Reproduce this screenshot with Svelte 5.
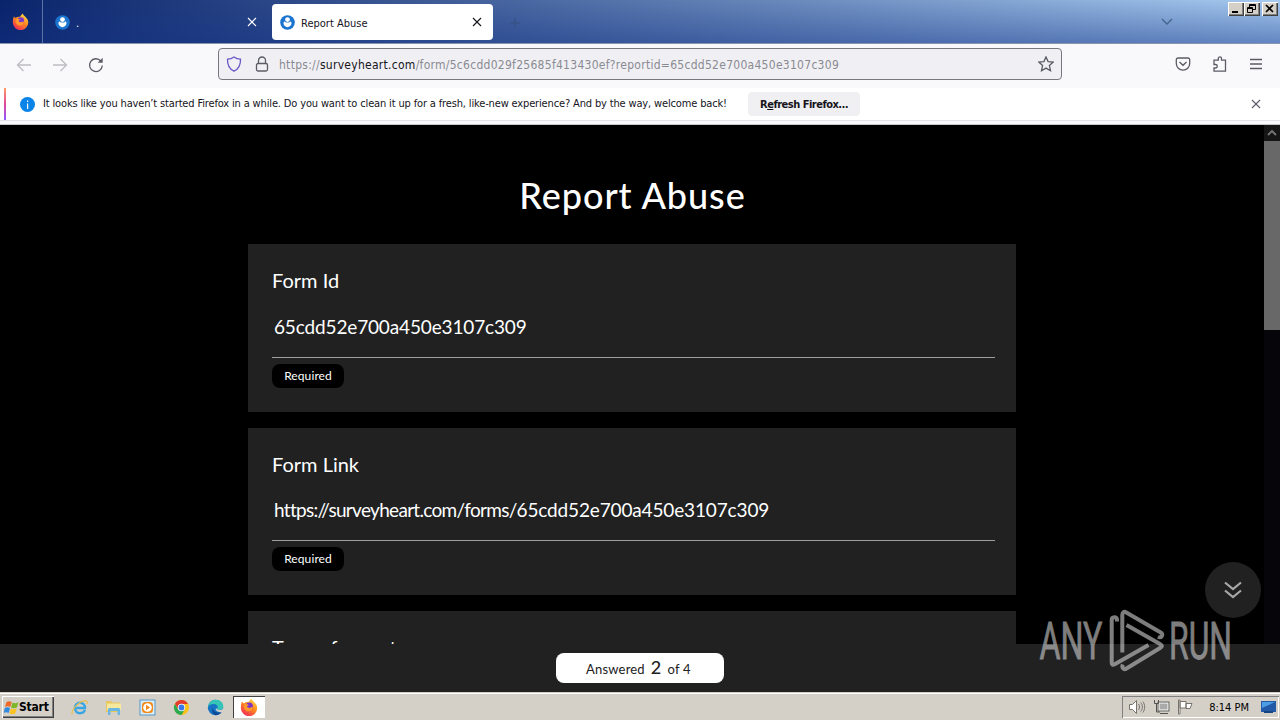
<script>
  const formId = '65cdd52e700a450e3107c309';

  const questions = [
    { label: 'Form Id', prefix: '', value: formId },
    { label: 'Form Link', prefix: 'https://surveyheart.com/forms/', value: formId },
    { label: 'Type of report' }
  ];
</script>

{#snippet firefox(size)}
  <svg width={size} height={size} viewBox="0 0 16 16">
    <defs>
      <linearGradient id="fox" x1="0.8" y1="0" x2="0.2" y2="1">
        <stop offset="0" stop-color="#ffe04a" />
        <stop offset="0.45" stop-color="#ff8a1f" />
        <stop offset="1" stop-color="#f0245c" />
      </linearGradient>
    </defs>
    <path d="M1.7 3.2 3.4 4.8C4.6 3.7 6 3.4 7.3 3.7 8.2 2.5 9.2 1.4 10.2.5c.2 1.3 1.3 2 2.5 3.2 1.6 1.5 2.6 3 2.6 5.1A7.2 7.2 0 0 1 .8 9C.7 6.9 1 4.9 1.7 3.2z" fill="url(#fox)" />
    <circle cx="8.2" cy="7.2" r="3.2" fill="#7b35c9" />
    <path d="M3.800 5.600c1.500-.5 3.100 0 4.200.8-1.500.2-2 1-1.600 1.700.6 1 2.800.9 4.800-.3-.2 3-2.200 4.400-4.400 4-2.400-.5-4-3.200-3-6.200z" fill="#ff9a2b" />
  </svg>
{/snippet}

{#snippet favicon()}
  <svg width="15" height="15" viewBox="0 0 15 15">
    <circle cx="7.5" cy="7.5" r="7.3" fill="#1b74cf" />
    <circle cx="7.5" cy="4.6" r="2.4" fill="#fff" />
    <path d="M4.300 6.300c.9 1 2 1.300 3.200 1.300s2.300-.3 3.200-1.300c1.700 2.100.6 5-3.200 6-3.800-1-4.900-3.900-3.200-6z" fill="#fff" />
  </svg>
{/snippet}

{#snippet cross(size)}
  <svg width={size} height={size} viewBox="0 0 10 10" fill="none" stroke="currentColor" stroke-width="1.1">
    <path d="M1 1l8 8M9 1L1 9" />
  </svg>
{/snippet}

<div class="screen">
  <header class="tabs">
    <div class="pinned">{@render firefox(17)}</div>
    <div class="tab">
      {@render favicon()}
      <span class="tab-title">.</span>
      {@render cross(10)}
    </div>
    <div class="tab active">
      {@render favicon()}
      <span class="tab-title">Report Abuse</span>
      {@render cross(10)}
    </div>
    <svg class="plus" width="10" height="10" viewBox="0 0 10 10" stroke="currentColor"><path d="M5 0v10M0 5h10" /></svg>
    <svg class="all-tabs" width="12" height="8" viewBox="0 0 12 8" fill="none" stroke="currentColor" stroke-width="1.4"><path d="M1 1l5 5 5-5" /></svg>
    <div class="window-buttons">
      <button aria-label="Minimize"><svg width="16" height="14" viewBox="0 0 16 14"><path d="M4 9h6v2H4z" /></svg></button>
      <button aria-label="Restore"><svg width="16" height="14" viewBox="0 0 16 14" fill="none" stroke="#000"><path d="M5.500 5V2.500h6v5H9M5 3.500h7M3.500 5.500h5v5h-5zM3 6.500h6" /></svg></button>
      <button class="close" aria-label="Close"><svg width="16" height="14" viewBox="0 0 16 14" stroke="#000" stroke-width="1.7"><path d="M4 3l7 7M11 3l-7 7" /></svg></button>
    </div>
  </header>

  <nav class="toolbar">
    <div class="history">
      <svg class="dim" width="16" height="14" viewBox="0 0 16 14"><path d="M15 7H1.500M7.500 1l-6 6 6 6" /></svg>
      <svg class="dim" width="16" height="14" viewBox="0 0 16 14"><path d="M1 7h13.500M8.500 1l6 6-6 6" /></svg>
      <svg width="16" height="16" viewBox="0 0 16 16"><path d="M14.300 8.500A6.400 6.400 0 1 1 12.800 4" /><path d="M14.700.8v5h-5z" fill="#5b5b66" stroke="none" /></svg>
    </div>
    <div class="urlbar">
      <svg class="shield" width="16" height="16" viewBox="0 0 16 16"><path d="M8 1c2 1.500 4.200 2.100 6.500 2.200C14.700 8.500 12.500 13 8 15.200 3.500 13 1.300 8.500 1.500 3.200 3.800 3.100 6 2.500 8 1z" /></svg>
      <svg class="lock" width="14" height="16" viewBox="0 0 14 16"><rect x="1.5" y="7.5" width="11" height="7.5" rx="1.5" /><path d="M3.500 7.500V4.500a3.500 3.500 0 0 1 7 0v3" /></svg>
      <span class="url">https://<b>surveyheart.com</b>/form/5c6cdd029f25685f413430ef?reportid={formId}</span>
      <svg class="star" width="16" height="16" viewBox="0 0 16 16"><path d="M8 .9l2.100 4.700 5.100.5-3.800 3.500 1.100 5.100L8 12.100l-4.500 2.600 1.100-5.100L.8 6.100l5.100-.5z" /></svg>
    </div>
    <div class="actions">
      <svg width="16" height="16" viewBox="0 0 16 16"><path d="M3 2h10a1.700 1.700 0 0 1 1.700 1.700V7.500a6.700 6.700 0 0 1-13.400 0V3.700A1.700 1.700 0 0 1 3 2zM4.500 6L8 9.300 11.500 6" /></svg>
      <svg width="16" height="16" viewBox="0 0 16 16"><path d="M2 7V4.200h4.300V2.500a1.600 1.600 0 0 1 3.200 0v1.700h4V15.200H2V12h1.500a1.600 1.600 0 0 0 0-3.500H2z" /></svg>
      <svg width="14" height="14" viewBox="0 0 14 14"><path d="M1 2.500h12M1 7h12M1 11.500h12" /></svg>
    </div>
  </nav>

  <div class="notice">
    <i class="accent"></i>
    <svg width="15" height="15" viewBox="0 0 15 15"><circle cx="7.5" cy="7.5" r="7.5" fill="#0a84e8" /><path d="M7 6.500h1.200V12H7zM7 3.500h1.200v1.600H7z" fill="#fff" /></svg>
    <span class="message">It looks like you haven’t started Firefox in a while. Do you want to clean it up for a fresh, like-new experience? And by the way, welcome back!</span>
    <button>R<u>e</u>fresh Firefox…</button>
    <span class="dismiss">{@render cross(10)}</span>
  </div>

  <main class="page">
    <div class="form">
      <h1>Report Abuse</h1>
      {#each questions as q}
        <section class="card">
          <div class="label">{q.label}</div>
          {#if q.value}
            <div class="value"><span class="prefix">{q.prefix}</span>{q.value}</div>
            <span class="required">Required</span>
          {/if}
        </section>
      {/each}
    </div>
    <div class="scrollbar">
      <div class="arrow"><svg width="10" height="6" viewBox="0 0 10 6" fill="none" stroke="#777" stroke-width="1.8"><path d="M1 5l4-4 4 4" /></svg></div>
      <div class="thumb"></div>
    </div>
    <div class="scroll-down">
      <svg width="18" height="18" viewBox="0 0 18 18" fill="none" stroke="#a8a8a8" stroke-width="2.2"><path d="M1 1.500l8 6.500 8-6.500M1 9.500l8 6.500 8-6.500" /></svg>
    </div>
    <footer class="progress">
      <div class="pill"><span>Answered</span><strong>2</strong><span>of 4</span></div>
    </footer>
    <svg class="watermark" width="200" height="66" viewBox="0 0 200 66">
      <text x="3.500" y="51" textLength="63" lengthAdjust="spacingAndGlyphs">ANY</text>
      <text x="133" y="51" textLength="63" lengthAdjust="spacingAndGlyphs">RUN</text>
      <g fill="none" stroke-width="4" stroke-linejoin="round">
        <path d="M81 13.500v-1.500c0-4-5.300-3.500-5.300 0v42.500c0 2 1 2.800 3 1.800L112.500 37" />
        <path d="M86.300 44.500V7c0-2.500 1.500-4 4-2.500l34.500 20c3.200 2 .5 6-2.800 4.300" />
        <path d="M90.500 17l33.500 19c2.500 1.400 2.500 2.600 0 4L90.500 60.500c-3 1.800-5-1-3.700-4" />
      </g>
    </svg>
  </main>

  <footer class="taskbar">
    <button class="start">
      <svg width="16" height="15" viewBox="0 0 16 15">
        <path d="M2.500 2C4.500.7 6 1 7.700 2L6.300 7C4.500 6 3 6 1 7z" fill="#ee6a28" />
        <path d="M8.500 2.500c2 1 3.500 1 6-.3L13 7.300c-2 1.200-4 1.200-6 .2z" fill="#7db728" />
        <path d="M.8 8c2-1.200 3.500-1 5.200 0L4.700 13C3 12 1.500 12-.3 13z" fill="#2f8ae0" />
        <path d="M6.800 8.500c2 1 4 1 6-.2l-1.400 5c-2 1.200-4 1.200-6 .2z" fill="#fbc322" />
      </svg>
      <span>Start</span>
    </button>
    <div class="launchers">
      <svg width="17" height="17" viewBox="0 0 17 17"><path d="M14 11c-1 2-2.700 3.200-5 3.200-3.200 0-5-2.500-5-5.200S6 3.700 9 3.700s5 2.300 5 5.300H4.500" fill="none" stroke="#38a5e4" stroke-width="2.4" /><path d="M1.300 15.500C-.5 12 8.500.5 15.500 2c1 .2 1 1.700.3 3" fill="none" stroke="#e9c04a" stroke-width="1.2" /></svg>
      <svg width="17" height="17" viewBox="0 0 17 17"><path d="M1 2h5l1 1.500h8V13H1z" fill="#e7c65c" /><path d="M2 4.500h14V11H2z" fill="#f8e89e" /><path d="M3 16v-5.500c0-1 .5-1.500 1.500-1.500h9c1 0 1.500.5 1.500 1.500V16h-2.500v-4h-7v4z" fill="#6bb7e4" /></svg>
      <svg width="17" height="17" viewBox="0 0 17 17"><rect x="1" y="1" width="15" height="15" fill="#d9ecf8" stroke="#5597c9" /><rect x="3" y="3" width="11" height="11" rx="3.5" fill="#f28a18" /><circle cx="8.5" cy="8.5" r="4.3" fill="#fff" /><path d="M7 5.700v5.600l4-2.800z" fill="#f28a18" /></svg>
      <svg width="17" height="17" viewBox="0 0 17 17"><circle cx="8.5" cy="8.5" r="7.5" fill="#fbc116" /><path d="M2 4.700A7.500 7.500 0 0 0 8.500 16l3.300-5.600H5.200z" fill="#2da94f" /><path d="M8.500 5H15A7.500 7.500 0 0 0 2 4.700L5.200 10z" fill="#e33b2e" /><circle cx="8.5" cy="8.5" r="3.7" fill="#fff" /><circle cx="8.5" cy="8.5" r="2.9" fill="#3b78e7" /></svg>
      <svg width="17" height="17" viewBox="0 0 17 17"><circle cx="8.5" cy="8.5" r="7.7" fill="#1674c5" /><path d="M1 8C1.500 3.500 5 .8 8.800.8c4.500 0 7.500 3 7.500 6.500 0 2.500-2 3.700-4 3.700-1.500 0-2.500-.6-1.800-1.800C11.500 7 9 4.800 6.300 5 4 5 2 6.200 1 8z" fill="#35c4b5" /><path d="M10.300 9.300C9.500 10.500 11 11.200 12.500 11c1.500 0 2.600-.5 3.500-1.500V13l-1.500.4C12 13.500 9 12.500 8.500 10z" fill="#d4d0c8" /><path d="M6 9c0 3 3 5.500 8.500 4.300-1.500 2-4 3-6.500 2.800C5 14.500 4.500 11 6 9z" fill="#0c4a96" /></svg>
    </div>
    <div class="running">{@render firefox(18)}</div>
    <div class="tray">
      <svg width="18" height="16" viewBox="0 0 18 16" fill="none" stroke="#77736c"><path d="M1.500 5.500h3l4-4v13l-4-4h-3z" fill="#fff" /><path d="M10.500 5c1.300 1.500 1.300 4.500 0 6M12.700 3.500c2.200 2.500 2.200 6.500 0 9M14.800 2.500c2.500 3 2.500 8 0 11" /></svg>
      <svg width="17" height="16" viewBox="0 0 17 16" fill="none" stroke="#55524d"><rect x="5.5" y="3.5" width="10" height="8" fill="#aaa" stroke="#fff" stroke-width="2" /><rect x="5" y="3" width="11" height="9" /><path d="M7 14.500h8M1.500 1v3.500h4V1M3.500 5v8H7" /></svg>
      <svg width="17" height="16" viewBox="0 0 17 16" fill="#fff" stroke="#77736c"><path d="M1.500 1v14h1.500V1zM3 2.500h6V9H3zM9 4.500h6L13 9.500H9z" /></svg>
      <span class="clock">8:14 PM</span>
      <svg width="15" height="12" viewBox="0 0 15 12"><rect width="15" height="11" fill="#225aa8" /><path d="M1 1h13L1 7z" fill="#4c9de5" /><path d="M3 10h9v2H3z" fill="#184480" /></svg>
    </div>
  </footer>
</div>

<style>
  :global(body) {
    margin: 0;
    overflow: hidden;
  }
  .screen {
    width: 1280px;
    height: 720px;
    display: flex;
    flex-direction: column;
    overflow: hidden;
    font-family: "DejaVu Sans Condensed", "DejaVu Sans", sans-serif;
    font-stretch: condensed;
    font-size: 11px;
    color: #15141a;
  }
  svg {
    display: block;
    flex: none;
  }
  button {
    font: inherit;
    border: 0;
    padding: 0;
    color: inherit;
  }

  .tabs {
    height: 43px;
    flex: none;
    display: flex;
    align-items: flex-start;
    background:
      linear-gradient(180deg, transparent, rgba(18, 50, 135, 0.45)),
      linear-gradient(90deg, #0a246a, #a6caf0);
    border-bottom: 1px solid #8a94ac;
  }
  .pinned {
    width: 43px;
    height: 43px;
    display: grid;
    place-items: center;
    border-right: 1px solid #5d72a4;
    box-sizing: border-box;
    padding-right: 2px;
  }
  .tab {
    display: flex;
    align-items: center;
    box-sizing: border-box;
    width: 221px;
    height: 36px;
    margin: 4px 0 0 4px;
    padding: 0 11px 0 8px;
    color: #fff;
    border-radius: 4px;
  }
  .tab.active {
    background: #fff;
    color: #15141a;
  }
  .tab-title {
    flex: 1;
    margin-left: 6px;
    padding-top: 2px;
  }
  .plus {
    margin: 18px 0 0 17px;
    color: #35507f;
  }
  .all-tabs {
    margin: 18px 0 0 auto;
    color: #45648f;
  }
  .window-buttons {
    display: flex;
    margin: 2px 2px 0 55px;
  }
  .window-buttons button {
    width: 16px;
    height: 14px;
    background: #d4d0c8;
    box-shadow: inset 1px 1px #fff, inset -1px -1px #404040, inset -2px -2px #808080;
  }
  .window-buttons .close {
    margin-left: 2px;
  }

  .toolbar {
    height: 44px;
    flex: none;
    display: flex;
    align-items: center;
    box-sizing: border-box;
    padding: 0 17px 4px 16px;
    background: #f9f9fb;
  }
  .toolbar svg {
    fill: none;
    stroke: #5b5b66;
    stroke-width: 1.3;
  }
  .history {
    display: flex;
    align-items: center;
    gap: 20px;
    width: 202px;
    padding-top: 1px;
  }
  .toolbar .dim {
    stroke: #bdbdc2;
  }
  .urlbar {
    display: flex;
    align-items: center;
    box-sizing: border-box;
    width: 844px;
    height: 32px;
    padding: 0 7px;
    border: 1px solid #77777f;
    border-radius: 4px;
    background: #f0f0f4;
  }
  .urlbar .shield {
    stroke: #6a5ac8;
  }
  .lock {
    margin: 0 10px 0 13px;
  }
  .url {
    flex: 1;
    padding-top: 2px;
    font-size: 12px;
    letter-spacing: 0.276px;
    color: #8a8a92;
    white-space: nowrap;
  }
  .url b {
    font-weight: normal;
    color: #15141a;
  }
  .actions {
    display: flex;
    align-items: center;
    gap: 21px;
    margin-left: auto;
  }

  .notice {
    height: 33px;
    flex: none;
    display: flex;
    align-items: center;
    box-sizing: border-box;
    padding: 0 19px 0 4px;
    background: #fff;
    border-bottom: 1px solid #e4e4e8;
    box-shadow: 0 3px #f9f9fb;
    margin-bottom: 3px;
  }
  .accent {
    width: 2px;
    height: 32px;
    margin-right: 14px;
    background: linear-gradient(#ff9a62, #e0479c 50%, #9059ff);
  }
  .message {
    margin-left: 8px;
    padding-bottom: 2px;
    letter-spacing: -0.149px;
    white-space: nowrap;
  }
  .notice button {
    width: 112px;
    height: 24px;
    margin-left: 21px;
    border-radius: 4px;
    background: #f0f0f2;
    font-weight: bold;
    letter-spacing: -0.5px;
  }
  .dismiss {
    margin-left: auto;
    color: #5b5b66;
  }

  .page {
    position: relative;
    flex: 1;
    display: flex;
    border-top: 1px solid #c8c8cc;
    min-height: 0;
    background: #000;
    color: #fff;
    font-family: Lato, sans-serif;
    font-stretch: normal;
  }
  .form {
    width: 768px;
    margin-left: 248px;
    overflow: hidden;
  }
  h1 {
    margin: 0;
    height: 119px;
    line-height: 141px;
    padding-left: 1px;
    text-align: center;
    font-size: 36px;
    font-weight: 500;
    letter-spacing: 0.95px;
  }
  .card {
    height: 168px;
    box-sizing: border-box;
    margin-bottom: 16px;
    padding: 24px 21px 0 24px;
    background: #212121;
  }
  .card + .card {
    height: 167px;
  }
  .label {
    height: 28px;
    line-height: 24px;
    font-size: 20px;
  }
  .value {
    height: 61px;
    line-height: 62px;
    padding-left: 2px;
    font-size: 19px;
    letter-spacing: -0.15px;
    border-bottom: 1px solid #9e9e9e;
  }
  .card + .card .value {
    height: 60px;
    line-height: 59px;
  }
  .prefix {
    letter-spacing: -0.69px;
  }
  .required {
    display: block;
    width: 72px;
    height: 24px;
    margin-top: 6px;
    line-height: 23px;
    text-align: center;
    border-radius: 8px;
    background: #000;
    font-size: 12px;
    letter-spacing: 0.1px;
  }
  .scrollbar {
    width: 16px;
    margin-left: auto;
    background: #06060a;
  }
  .arrow {
    display: grid;
    place-items: center;
    height: 16px;
    background: #151515;
  }
  .thumb {
    height: 189px;
    background: #686868;
  }
  .scroll-down {
    position: absolute;
    right: 19px;
    bottom: 74px;
    display: grid;
    place-items: center;
    width: 56px;
    height: 56px;
    border-radius: 50%;
    background: #212121;
  }
  .progress {
    position: absolute;
    left: 0;
    right: 0;
    bottom: 0;
    height: 48px;
    display: grid;
    place-items: center;
    background: #212121;
  }
  .pill {
    display: flex;
    align-items: baseline;
    gap: 6px;
    box-sizing: border-box;
    width: 168px;
    height: 30px;
    padding-left: 30px;
    line-height: 28px;
    border-radius: 8px;
    background: #fff;
    color: #212121;
    font-size: 13px;
    letter-spacing: 0.2px;
  }
  .pill strong {
    font-size: 18px;
    font-weight: 500;
  }
  .watermark {
    position: absolute;
    left: 1036px;
    top: 483px;
    overflow: visible;
    opacity: 0.6;
    stroke: #d0d0d0;
  }
  .watermark text {
    font: 400 52px Roboto, sans-serif;
    fill: #d0d0d0;
    stroke-width: 0.8;
  }

  .taskbar {
    height: 28px;
    flex: none;
    display: flex;
    align-items: center;
    box-sizing: border-box;
    padding: 2px 0 1px 2px;
    background: #d4d0c8;
    border-top: 1px solid #d4d0c8;
    box-shadow: inset 0 1px #fff;
  }
  .start {
    display: flex;
    align-items: center;
    width: 52px;
    height: 22px;
    padding-left: 2px;
    background: #d4d0c8;
    box-shadow: inset 1px 1px #fff, inset -1px -1px #404040, inset -2px -2px #808080;
    font-weight: bold;
    font-size: 12px;
    letter-spacing: -0.2px;
    color: #000;
  }
  .start svg {
    margin-right: -1px;
  }
  .launchers {
    display: flex;
    gap: 17px;
    margin-left: 17px;
  }
  .running {
    display: grid;
    place-items: center;
    width: 32px;
    height: 22px;
    margin-left: 9px;
    background: #fff;
    box-shadow: inset 1px 1px #404040, inset -1px -1px #fff;
  }
  .tray {
    display: flex;
    align-items: center;
    box-sizing: border-box;
    width: 157px;
    height: 22px;
    margin: 0 1px 0 auto;
    padding: 0 3px 0 6px;
    gap: 7px;
    box-shadow: inset 1px 1px #808080, inset -1px -1px #fff;
    color: #000;
  }
  .clock {
    margin-left: auto;
    margin-right: 5px;
    white-space: nowrap;
  }
</style>
